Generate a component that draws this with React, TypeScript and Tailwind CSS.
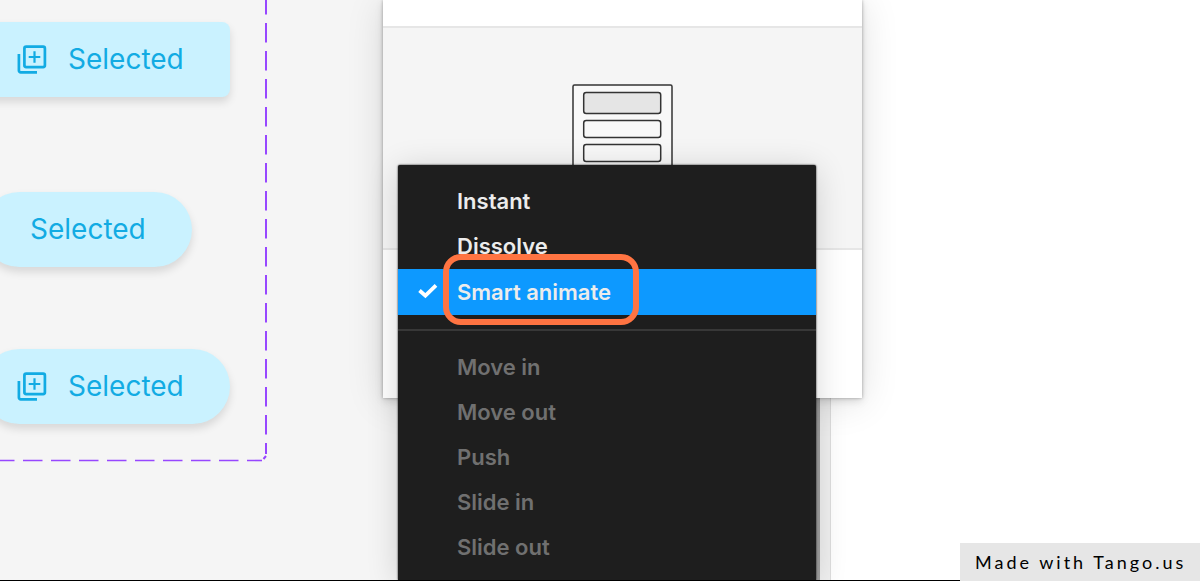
import clsx from 'clsx';

type Easing = { label: string; checked?: boolean; disabled?: boolean };

const TRANSITIONS: Easing[] = [
  { label: 'Instant' },
  { label: 'Dissolve' },
  { label: 'Smart animate', checked: true },
];

const MOTIONS: Easing[] = [
  { label: 'Move in', disabled: true },
  { label: 'Move out', disabled: true },
  { label: 'Push', disabled: true },
  { label: 'Slide in', disabled: true },
  { label: 'Slide out', disabled: true },
];

function LibraryAddIcon() {
  return (
    <svg width="32" height="32" viewBox="0 0 32 32" fill="none" stroke="currentColor" strokeWidth="2.7" aria-hidden="true">
      <rect x="8.4" y="3.6" width="20.5" height="20.5" rx="1.8" />
      <path d="M2.9 11v16.5a1.8 1.8 0 0 0 1.8 1.8H21" />
      <path d="M18.5 8.2v11.6M12.7 14h11.6" strokeWidth="2.2" />
    </svg>
  );
}

function CheckIcon() {
  return (
    <svg width="20" height="16" viewBox="0 0 20 16" fill="none" stroke="currentColor" strokeWidth="3.8" aria-hidden="true">
      <path d="M1.5 6.5L7.4 11.6L18 1.4" />
    </svg>
  );
}

function SelectedChip({ icon = false, pill = false }: { icon?: boolean; pill?: boolean }) {
  return (
    <button
      className={clsx(
        'flex h-[75px] items-center gap-5 bg-[#caf2ff] pr-[46px] pb-0.5 text-[28px] text-[#12abe3] shadow-[0_5px_8px_rgba(0,0,0,0.12)]',
        icon ? 'pl-[34px]' : 'pl-12',
        pill ? 'rounded-full' : 'rounded-lg',
      )}
    >
      {icon && <LibraryAddIcon />}
      <span>Selected</span>
    </button>
  );
}

// Dashed outline of the component set, anchored to its bottom right corner
function VariantOutline() {
  return (
    <svg className="absolute inset-0" width="268" height="462" viewBox="0 0 268 462" fill="none" stroke="#9747ff" strokeWidth="2" aria-hidden="true">
      <path d="M266 -5V446" strokeDasharray="19.5 8.5" />
      <path d="M266 443V454M263.5 459L266 456" />
      <path d="M-5 460.5H262" strokeDasharray="19.5 8.5" strokeWidth="1.6" />
    </svg>
  );
}

function AnimationPreview() {
  return (
    <svg width="104" height="106" viewBox="0 0 104 106" fill="#f8f8f8" stroke="#333" strokeWidth="1.5" aria-hidden="true">
      <rect x="2" y="1" width="99" height="104" rx="1.5" />
      <rect x="12.7" y="8.5" width="77" height="21" rx="2.5" fill="#e5e5e5" />
      <rect x="12.7" y="36.5" width="77" height="17" rx="2.5" />
      <rect x="12.7" y="60.5" width="77" height="17" rx="2.5" />
    </svg>
  );
}

function MenuItem({ label, checked, disabled }: Easing) {
  return (
    <button
      role="menuitemradio"
      aria-checked={!!checked}
      disabled={disabled}
      className={clsx(
        'flex w-full items-center pl-5 text-left',
        checked ? 'h-[46px] bg-[#0d99ff]' : 'h-[45px]',
        disabled ? 'text-[#707070]' : 'text-[#ececec]',
      )}
    >
      <span className="w-[39px] shrink-0 text-white">{checked && <CheckIcon />}</span>
      <span className="whitespace-nowrap">{label}</span>
    </button>
  );
}

export default function App() {
  return (
    <div className="relative h-screen overflow-hidden border-b border-black bg-white font-['Inter',sans-serif]">
      <div className="flex h-full">
        <main className="relative w-[816px] shrink-0 bg-[#f5f5f5]">
          <VariantOutline />
          <div className="-ml-[18px] flex flex-col items-start pt-[22px]">
            <SelectedChip icon />
            <div className="pt-[95px] pb-[82px]">
              <SelectedChip pill />
            </div>
            <SelectedChip icon pill />
          </div>
        </main>
        <div className="w-1 shrink-0 bg-[#a0a0a0]" />
        <div className="w-[11px] shrink-0 border-r border-[#dedede] bg-[#f0f0f0]" />
      </div>

      {/* Interaction details window */}
      <section className="absolute top-0 left-[383px] flex h-[398px] w-[479px] flex-col bg-white shadow-[0_0_3px_rgba(0,0,0,0.3),0_3px_8px_rgba(0,0,0,0.12),0_4px_36px_rgba(0,0,0,0.12)]">
        <div className="h-[26px]" />
        <div className="flex h-[224px] justify-center border-y-2 border-[#e6e6e6] bg-[#f5f5f5] pt-14">
          <AnimationPreview />
        </div>
      </section>

      {/* Animation type menu */}
      <div
        role="menu"
        className="absolute top-[165px] bottom-0 left-[398px] w-[418px] overflow-hidden rounded-t-xs bg-[#1e1e1e] pt-[14px] text-[22px] font-semibold shadow-[0_0_2px_#000,0_4px_32px_rgba(0,0,0,0.16)]"
      >
        {TRANSITIONS.map((item) => <MenuItem key={item.label} {...item} />)}
        <hr className="my-[14px] border-t-2 border-[#383838]" />
        {MOTIONS.map((item) => <MenuItem key={item.label} {...item} />)}
      </div>

      <div className="absolute top-[254px] left-[443px] h-[71px] w-[196px] rounded-[18px] border-6 border-[#ff7442]" />

      <a
        href="#tango"
        className="fixed right-0 bottom-0 flex h-[38px] w-60 items-center bg-[#e6e6e6] pl-[15px] font-['Lato',sans-serif] text-lg tracking-[3px] whitespace-nowrap text-black"
      >
        Made with Tango.us
      </a>
    </div>
  );
}
